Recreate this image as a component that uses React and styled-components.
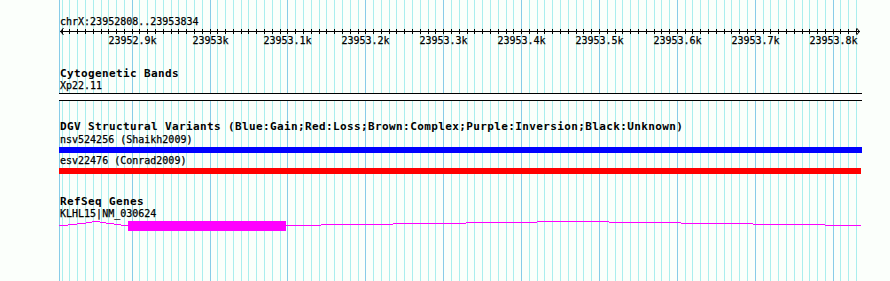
import React from "react";
import styled, { createGlobalStyle } from "styled-components";

const START = 23952808;
const END = 23953834;
const PX_PER_BP = 0.77889;
// screen column of a base position
const toX = (bp) => Math.floor(60.5 + (bp - START) * PX_PER_BP);

const MONO = `"DejaVu Sans Mono", "Liberation Mono", monospace`;

const GlobalStyle = createGlobalStyle`
  html, body {
    margin: 0;
    padding: 0;
    background: #fbfffb;
  }
  body {
    font-family: ${MONO};
    color: #000;
  }
`;

const Page = styled.div`
  position: relative;
  width: 890px;
  height: 281px;
  overflow: hidden;
  background: #fbfffb;
`;

const Grid = styled.svg`
  position: absolute;
  left: 0;
  top: 0;
  z-index: 0;
`;

const Tracks = styled.div`
  position: relative;
  z-index: 1;
  margin-left: 59px;
  width: 803px;
  display: flex;
  flex-direction: column;
`;

const Ruler = styled.svg`
  display: block;
  font-family: ${MONO};
  font-size: 10px;

  text {
    stroke: #000;
    stroke-width: 0.25px;
  }
`;

const TrackTitle = styled.div`
  margin-top: ${(p) => p.$gap}px;
  padding-left: 1px;
  height: 12px;
  font: bold 11px/12px ${MONO};
  letter-spacing: 0.38px;
  white-space: nowrap;
`;

const ItemLabel = styled.div`
  margin-top: ${(p) => p.$gap}px;
  padding-left: 1px;
  height: 10px;
  font: 10px/10px ${MONO};
  -webkit-text-stroke: 0.25px #000;
  white-space: nowrap;
`;

const Band = styled.div`
  margin-top: 2px;
  height: 6px;
  background: #fff;
  border-top: 1px solid #000;
  border-bottom: 1px solid #000;
`;

const FeatureBar = styled.div`
  margin-top: ${(p) => p.$gap}px;
  height: 6px;
  width: ${(p) => p.$width}px;
  background: ${(p) => p.$color};
`;

const GeneGlyph = styled.svg`
  display: block;
`;

const tens = [];
for (let bp = 23952810; bp <= 23953830; bp += 10) tens.push(bp);
const hundreds = tens.filter((bp) => bp % 100 === 0);

const GridLines = () => (
  <Grid width="890" height="281" shapeRendering="crispEdges">
    {tens
      .filter((bp) => bp % 100 !== 0)
      .map((bp) => (
        <rect key={bp} x={toX(bp)} y="0" width="1" height="281" fill="#aaeeee" />
      ))}
    <rect x="59" y="0" width="1" height="281" fill="#88cce8" />
    {hundreds.map((bp) => (
      <rect key={bp} x={toX(bp)} y="0" width="1" height="281" fill="#88cce8" />
    ))}
  </Grid>
);

const Scale = () => (
  <Ruler width="803" height="48" viewBox="59 0 803 48">
    <text x="60" y="25">{`chrX:${START}..${END}`}</text>
    <g shapeRendering="crispEdges" fill="#000">
      <rect x="60" y="31" width="800" height="1" />
      {tens.map((bp) => (
        <rect key={bp} x={toX(bp)} y="29" width="1" height="5" />
      ))}
    </g>
    <polyline points="63.5,28 60.5,31.5 63.5,35" fill="none" stroke="#000" strokeWidth="1" />
    <polyline points="856.5,28 859.5,31.5 856.5,35" fill="none" stroke="#000" strokeWidth="1" />
    {hundreds.map((bp) => (
      <text key={bp} x={toX(bp) + 0.5} y="44" textAnchor="middle">
        {`${+(bp / 1000).toFixed(1)}k`}
      </text>
    ))}
  </Ruler>
);

// intron line drawn as 1px steps, [x1, x2, row]
const intron = [
  [59, 68, 225], [68, 77, 224], [77, 86, 223], [86, 92, 222], [92, 100, 221],
  [100, 106, 222], [106, 114, 223], [114, 121, 224], [121, 128, 225],
  [286, 321, 225], [321, 393, 224], [393, 466, 223], [466, 537, 222], [537, 609, 221],
  [609, 681, 222], [681, 753, 223], [753, 825, 224], [825, 861, 225],
];

const Gene = () => (
  <GeneGlyph width="803" height="14" viewBox="59 219 803 14" shapeRendering="crispEdges">
    {intron.map(([a, b, y]) => (
      <rect key={a} x={a} y={y} width={b - a} height="1" fill="#ff00ff" />
    ))}
    <rect x="128" y="221" width="158" height="10" fill="#ff00ff" />
  </GeneGlyph>
);

const App = () => (
  <>
    <GlobalStyle />
    <Page>
      <GridLines />
      <Tracks>
        <Scale />

        <TrackTitle $gap={20}>Cytogenetic Bands</TrackTitle>
        <ItemLabel $gap={1}>Xp22.11</ItemLabel>
        <Band />

        <TrackTitle $gap={20}>
          DGV Structural Variants (Blue:Gain;Red:Loss;Brown:Complex;Purple:Inversion;Black:Unknown)
        </TrackTitle>
        <ItemLabel $gap={2}>nsv524256 (Shaikh2009)</ItemLabel>
        <FeatureBar $gap={2} $color="#0000ff" $width={803} />
        <ItemLabel $gap={3}>esv22476 (Conrad2009)</ItemLabel>
        <FeatureBar $gap={2} $color="#ff0000" $width={802} />

        <TrackTitle $gap={22}>RefSeq Genes</TrackTitle>
        <ItemLabel $gap={1}>KLHL15|NM_030624</ItemLabel>
        <Gene />
      </Tracks>
    </Page>
  </>
);

export default App;
